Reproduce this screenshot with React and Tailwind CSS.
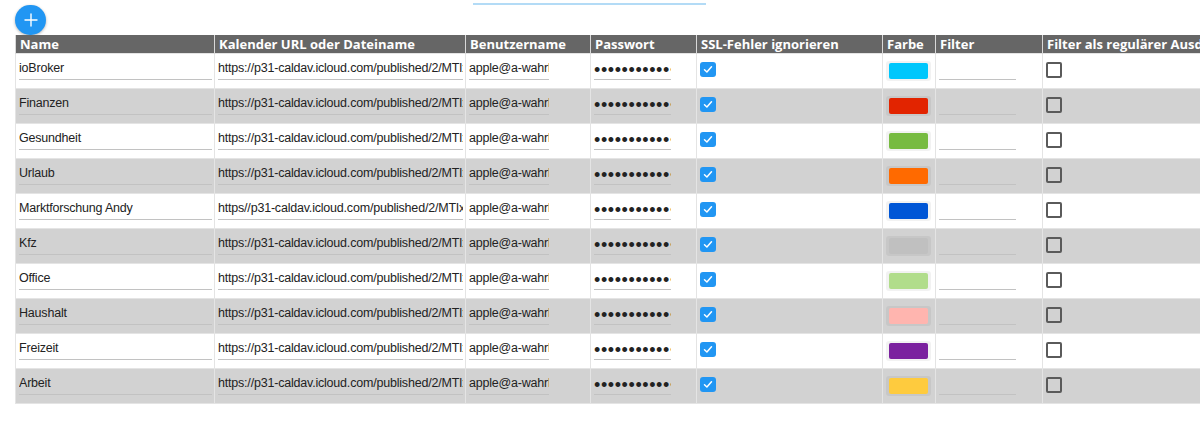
const URL = 'https://p31-caldav.icloud.com/published/2/MTIxNzY0OTIzMzEyMTc2NIe6';

const CALENDARS = [
  { name: 'ioBroker', url: URL, color: '#00c7fc' },
  { name: 'Finanzen', url: URL, color: '#e22400' },
  { name: 'Gesundheit', url: URL, color: '#77bb41' },
  { name: 'Urlaub', url: URL, color: '#ff6a00' },
  { name: 'Marktforschung Andy', url: 'https//p31-caldav.icloud.com/published/2/MTIxNzY0OTIz', color: '#0056d6' },
  { name: 'Kfz', url: URL, color: '#c0c0c0' },
  { name: 'Office', url: URL, color: '#b1dd8b' },
  { name: 'Haushalt', url: URL, color: '#ffb5af' },
  { name: 'Freizeit', url: URL, color: '#7b219f' },
  { name: 'Arbeit', url: URL, color: '#fecb3e' },
];

const HEADERS = [
  'Name',
  'Kalender URL oder Dateiname',
  'Benutzername',
  'Passwort',
  'SSL-Fehler ignorieren',
  'Farbe',
  'Filter',
  'Filter als regulärer Ausdruck',
];

const WIDTHS = ['w-[199px]', 'w-[251px]', 'w-[125px]', 'w-[106px]', 'w-[186px]', 'w-[53px]', 'w-[107px]', 'w-[240px]'];

function TextField({ value, width, type = 'text', className = 'text-[12.5px] tracking-[-0.2px] pb-[1px]' }) {
  return (
    <input
      type={type}
      readOnly
      defaultValue={value}
      className={`block ${width} h-[23px] border-b border-[#c2c2c2] bg-transparent outline-none p-0 text-[#222] ${className}`}
    />
  );
}

function CheckBox({ checked }) {
  if (checked) {
    return (
      <div className="w-[16px] h-[15px] rounded-[3px] bg-[#2196f3] flex items-center justify-center">
        <svg width="10" height="9" viewBox="0 0 10 9" fill="none">
          <path d="M1.5 4.8 L3.9 7 L8.5 1.8" stroke="white" strokeWidth="1.5" strokeLinecap="round" strokeLinejoin="round" />
        </svg>
      </div>
    );
  }
  return <div className="w-[16px] h-[16px] rounded-[2px] border-2 border-[#5a5a5a]" />;
}

export default function App() {
  return (
    <div className="w-[1200px] h-[433px] overflow-hidden bg-white font-['Liberation_Sans',Arial,sans-serif]">
      <div className="pt-[3px] ml-[473px] w-[233px] h-[5px]">
        <div className="h-[2px] bg-[#b3dbf6]" />
      </div>
      <div className="ml-[15px] h-[30px] w-[31px] rounded-full bg-[#2196f3] shadow-[0_1px_3px_rgba(0,0,0,0.3)] flex items-center justify-center">
        <svg width="14" height="14" viewBox="0 0 14 14">
          <path d="M7 1 V13 M1 7 H13" stroke="white" strokeWidth="1.4" strokeLinecap="round" />
        </svg>
      </div>
      <table className="ml-[15px] table-fixed border-collapse w-[1267px]">
        <colgroup>
          {WIDTHS.map((w, i) => (
            <col key={i} className={w} />
          ))}
        </colgroup>
        <thead>
          <tr className="bg-[#666666]">
            {HEADERS.map((h) => (
              <th
                key={h}
                className="h-[18px] p-0 pl-[4px] text-left align-middle whitespace-nowrap overflow-hidden border-x border-[#d8d8d8] text-white font-bold text-[13px] leading-[18px] font-['Open_Sans',sans-serif]"
              >
                {h}
              </th>
            ))}
          </tr>
        </thead>
        <tbody>
          {CALENDARS.map((c, i) => (
            <tr key={c.name} className={i % 2 ? 'bg-[#d2d2d2]' : 'bg-white'}>
              <td className="h-[35px] p-0 pl-[3px] pt-[3px] align-top border border-[#e4e4e4]">
                <TextField value={c.name} width="w-[193px]" />
              </td>
              <td className="p-0 pl-[3px] pt-[3px] align-top border border-[#e4e4e4]">
                <TextField value={c.url} width="w-[245px]" />
              </td>
              <td className="p-0 pl-[3px] pt-[3px] align-top border border-[#e4e4e4]">
                <TextField value="apple@a-wahrheit.de" width="w-[80px]" />
              </td>
              <td className="p-0 pl-[3px] pt-[3px] align-top border border-[#e4e4e4]">
                <TextField value="abcdefghijklmnop" type="password" width="w-[77px]" className="text-[18px] tracking-[0.6px] pt-[5px]" />
              </td>
              <td className="p-0 pl-[3px] pt-[8px] align-top border border-[#e4e4e4]">
                <CheckBox checked />
              </td>
              <td className="p-0 pl-[3px] pt-[7px] align-top border border-[#e4e4e4]">
                <div className="w-[45px] h-[20px] rounded-[3px] bg-[rgba(0,0,0,0.05)] flex items-center justify-center">
                  <div className="w-[39px] h-[16px] rounded-[2px]" style={{ backgroundColor: c.color }} />
                </div>
              </td>
              <td className="p-0 pl-[3px] pt-[3px] align-top border border-[#e4e4e4]">
                <TextField value="" width="w-[77px]" />
              </td>
              <td className="p-0 pl-[3px] pt-[8px] align-top border border-[#e4e4e4]">
                <CheckBox checked={false} />
              </td>
            </tr>
          ))}
        </tbody>
      </table>
    </div>
  );
}
